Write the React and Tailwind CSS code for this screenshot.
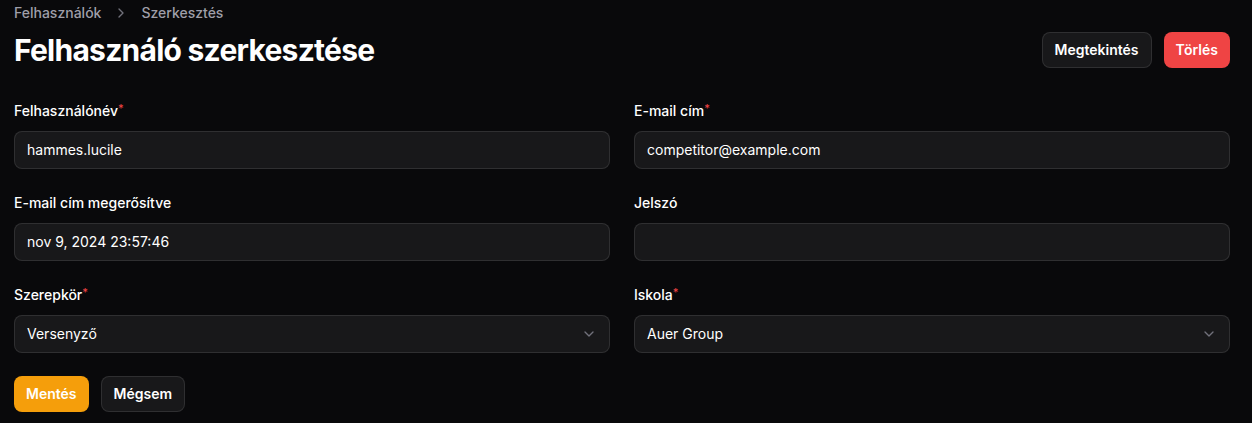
import { ChevronRight, ChevronDown } from 'lucide-react';

function Label({ children, required }) {
  return (
    <label className="h-5 flex items-start text-sm font-medium text-white leading-5">
      {children}
      {required && <span className="text-[#ef4444] font-medium text-[11px] leading-3 mt-[1px]">*</span>}
    </label>
  );
}

function Field({ label, required, value }) {
  return (
    <div className="flex flex-col gap-[10px]">
      <Label required={required}>{label}</Label>
      <div className="h-[38px] rounded-lg border border-white/10 bg-[#18181a] flex items-center px-3 text-sm text-white">
        {value}
      </div>
    </div>
  );
}

function SelectField({ label, required, value }) {
  return (
    <div className="flex flex-col gap-[10px]">
      <Label required={required}>{label}</Label>
      <div className="h-[38px] rounded-lg border border-white/10 bg-[#18181a] flex items-center justify-between pl-3 pr-3 text-sm text-white">
        <span>{value}</span>
        <ChevronDown size={16} strokeWidth={2} className="text-zinc-500" />
      </div>
    </div>
  );
}

export default function App() {
  return (
    <div
      className="min-h-screen w-full bg-[#09090b] text-white pl-[14px] pr-[22px]"
      style={{ fontFamily: 'Inter, "Noto Sans", sans-serif' }}
    >
      {/* Header */}
      <div className="flex items-start justify-between">
        <div>
          <nav className="flex items-center h-[26px] text-sm font-medium text-zinc-400 gap-[12px]">
            <span>Felhasználók</span>
            <ChevronRight size={16} strokeWidth={2} className="text-zinc-500" />
            <span>Szerkesztés</span>
          </nav>
          <h1 className="text-[30px] font-bold leading-9 tracking-tight mt-[6px]">Felhasználó szerkesztése</h1>
        </div>
        <div className="flex items-center gap-3 mt-8">
          <button className="h-9 px-3 rounded-lg border border-white/10 bg-[#18181a] text-sm font-semibold">
            Megtekintés
          </button>
          <button className="h-9 px-3 rounded-lg bg-[#ef4444] text-sm font-semibold">Törlés</button>
        </div>
      </div>

      {/* Form */}
      <div className="grid grid-cols-2 gap-x-6 gap-y-6 mt-[33px]">
        <Field label="Felhasználónév" required value="hammes.lucile" />
        <Field label="E-mail cím" required value="competitor@example.com" />
        <Field label="E-mail cím megerősítve" value="nov 9, 2024 23:57:46" />
        <Field label="Jelszó" value="" />
        <SelectField label="Szerepkör" required value="Versenyző" />
        <SelectField label="Iskola" required value="Auer Group" />
      </div>

      <div className="flex items-center gap-3 mt-[23px]">
        <button className="h-9 px-3 rounded-lg bg-[#f59e0b] text-sm font-semibold">Mentés</button>
        <button className="h-9 px-3 rounded-lg border border-white/10 bg-[#18181a] text-sm font-semibold">
          Mégsem
        </button>
      </div>
    </div>
  );
}
